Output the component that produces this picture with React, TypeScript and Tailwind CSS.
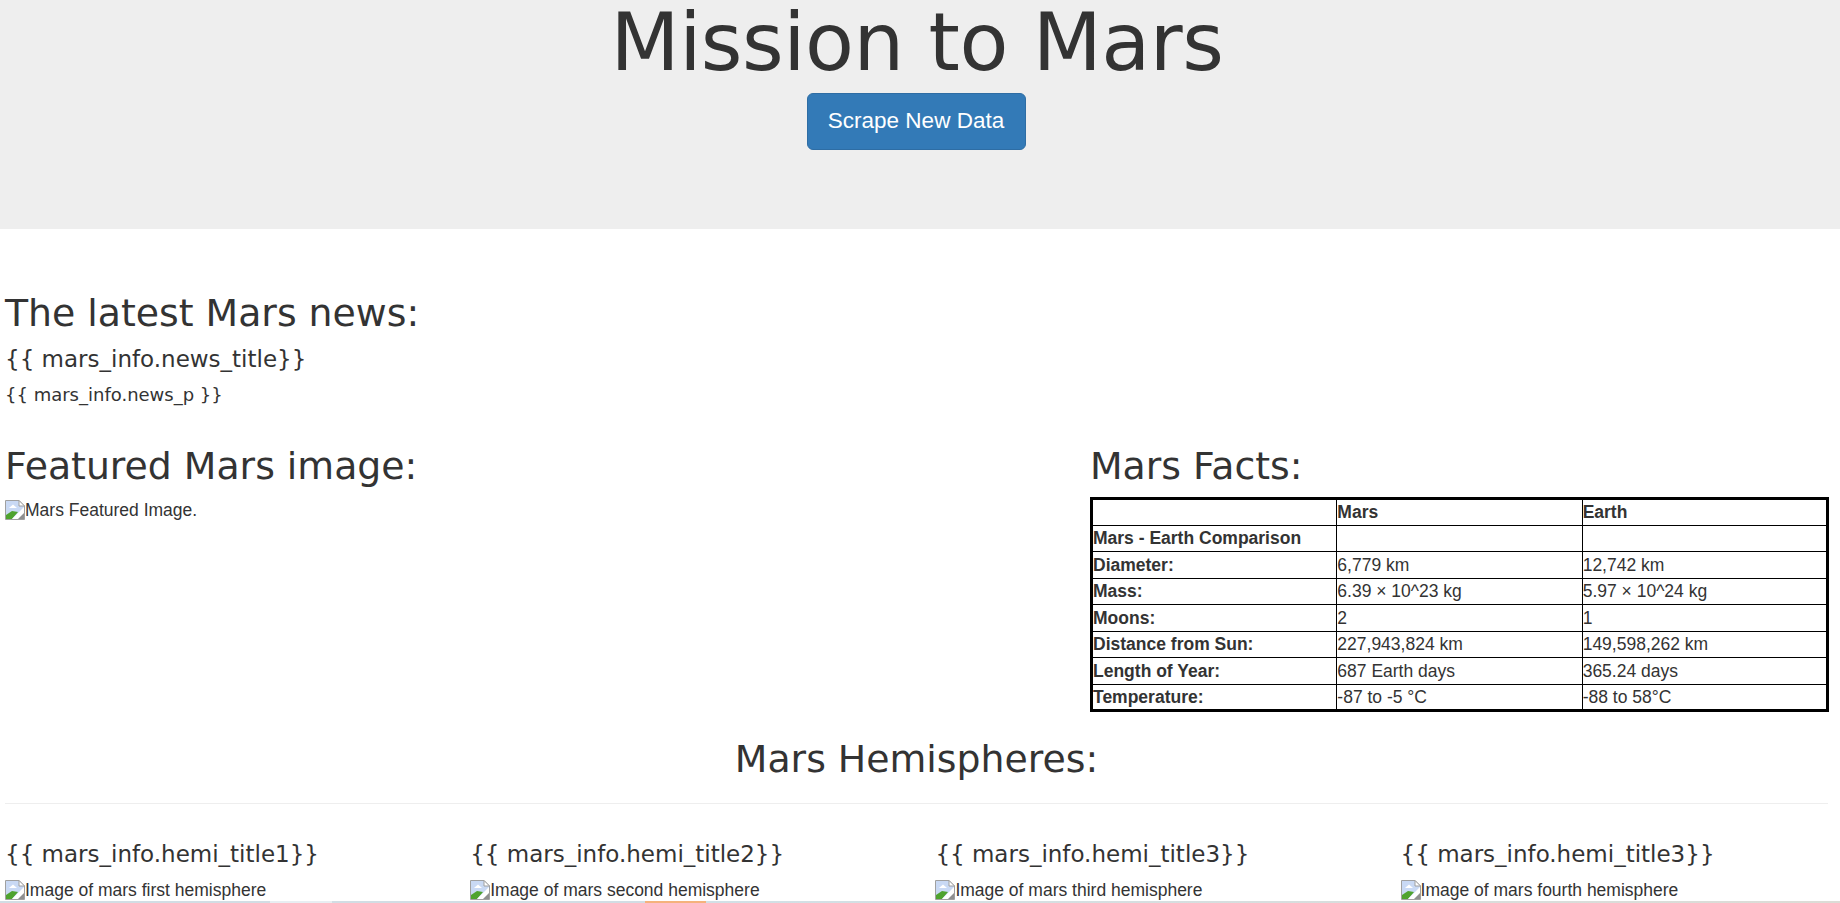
const facts = [
  ["", "Mars", "Earth"],
  ["Mars - Earth Comparison", "", ""],
  ["Diameter:", "6,779 km", "12,742 km"],
  ["Mass:", "6.39 × 10^23 kg", "5.97 × 10^24 kg"],
  ["Moons:", "2", "1"],
  ["Distance from Sun:", "227,943,824 km", "149,598,262 km"],
  ["Length of Year:", "687 Earth days", "365.24 days"],
  ["Temperature:", "-87 to -5 °C", "-88 to 58°C"],
];

function Broken() {
  return (
    <svg width="20" height="20" viewBox="0 0 20 20" className="shrink-0">
      <path d="M0.5 0.5H14L19.5 6V19.5H0.5Z" fill="#c9d9f4" stroke="#a0a0a0" />
      <path d="M14 0.5V6H19.5Z" fill="#fff" stroke="#a0a0a0" />
      <path d="M4 8L8 4.5L12 8Z" fill="#fff" />
      <path d="M1 19V15L7 11L13 12L7 19Z" fill="#4fa32f" />
      <path d="M7 19L19 7V19Z" fill="#fff" />
      <path d="M13 19L19 13V19Z" fill="#8f8f8f" />
    </svg>
  );
}

function Alt({ text }: { text: string }) {
  return (
    <div className="flex items-start text-[17.5px] leading-[20px] text-[#333] h-[20px] font-['Liberation_Sans',sans-serif]">
      <Broken />
      <span>{text}</span>
    </div>
  );
}

const hemis = [
  ["{{ mars_info.hemi_title1}}", "Image of mars first hemisphere"],
  ["{{ mars_info.hemi_title2}}", "Image of mars second hemisphere"],
  ["{{ mars_info.hemi_title3}}", "Image of mars third hemisphere"],
  ["{{ mars_info.hemi_title3}}", "Image of mars fourth hemisphere"],
];

export default function App() {
  return (
    <div className="h-[903px] overflow-hidden bg-white text-[#333] font-['Liberation_Sans',sans-serif] relative">
      <header className="h-[229px] bg-[#eee] flex flex-col items-center pr-[6px]">
        <h1 className="font-['DejaVu_Sans',sans-serif] text-[80px] leading-[94px] -mb-[8px] tracking-[-0.5px] -translate-y-[4px]">Mission to Mars</h1>
        <button className="mt-[7px] mr-[2px] h-[57px] w-[219px] bg-[#337ab7] border border-[#2e6da4] rounded-[6px] text-white text-[22.5px] leading-[52px] pb-[2px]">Scrape New Data</button>
      </header>
      <main className="pl-[5px] pr-[12px] font-['DejaVu_Sans',sans-serif]">
        <h2 className="text-[37.8px] leading-[40px] mt-[64px]">The latest Mars news:</h2>
        <h4 className="text-[23px] leading-[26px] mt-[13px]">{"{{ mars_info.news_title}}"}</h4>
        <p className="text-[18px] leading-[22px] mt-[12px]">{"{{ mars_info.news_p }}"}</p>
        <div className="flex mt-[40px]">
          <section className="w-[1085px] shrink-0">
            <h2 className="text-[37.8px] leading-[40px]">Featured Mars image:</h2>
            <div className="mt-[14px]"><Alt text="Mars Featured Image." /></div>
          </section>
          <section className="flex-1">
            <h2 className="text-[37.8px] leading-[40px]">Mars Facts:</h2>
            <table className="mt-[11px] w-[739px] table-fixed border-collapse border-[3px] border-black font-['Liberation_Sans',sans-serif] text-[17.5px] leading-[22px]">
              <tbody>
                {facts.map((r) => (
                  <tr key={r[0] + r[1]} className="h-[26.5px]">
                    {r.map((c, i) => (
                      <td key={i} className={`border border-black px-0 align-middle whitespace-nowrap ${i === 0 || r[0] === "" ? "font-bold" : ""}`}>{c}</td>
                    ))}
                  </tr>
                ))}
              </tbody>
            </table>
          </section>
        </div>
        <h2 className="text-center text-[37.8px] leading-[40px] mt-[27px]">Mars Hemispheres:</h2>
        <hr className="mt-[24px] border-[#eee]" />
        <div className="grid grid-cols-[repeat(4,465.2px)] mt-[37px]">
          {hemis.map(([t, a], i) => (
            <div key={i}>
              <h4 className="text-[23px] leading-[26px]">{t}</h4>
              <div className="mt-[13px]"><Alt text={a} /></div>
            </div>
          ))}
        </div>
      </main>
      <div className="absolute bottom-0 left-0 right-0 h-[2px] flex">
        <div className="w-[270px] bg-[#d2dde4]" />
        <div className="w-[62px] bg-[#e8eef2]" />
        <div className="w-[313px] bg-[#d2dde4]" />
        <div className="w-[61px] bg-[#f5b27c]" />
        <div className="flex-1 bg-gradient-to-r from-[#d2e0e6] to-[#dcdcd6]" />
      </div>
    </div>
  );
}
